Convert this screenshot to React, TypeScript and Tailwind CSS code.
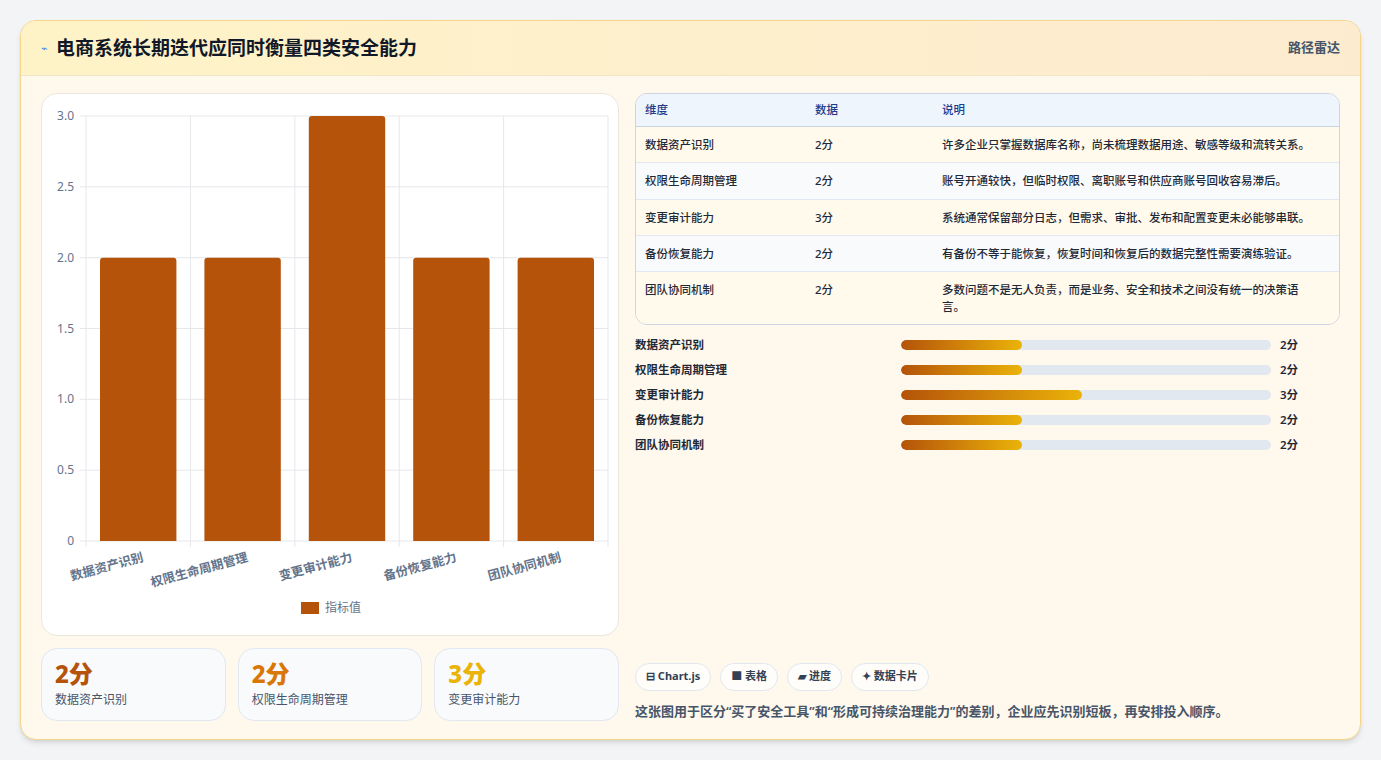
const rows = [
  { name: '数据资产识别', v: 2, d: '许多企业只掌握数据库名称，尚未梳理数据用途、敏感等级和流转关系。' },
  { name: '权限生命周期管理', v: 2, d: '账号开通较快，但临时权限、离职账号和供应商账号回收容易滞后。' },
  { name: '变更审计能力', v: 3, d: '系统通常保留部分日志，但需求、审批、发布和配置变更未必能够串联。' },
  { name: '备份恢复能力', v: 2, d: '有备份不等于能恢复，恢复时间和恢复后的数据完整性需要演练验证。' },
  { name: '团队协同机制', v: 2, d: '多数问题不是无人负责，而是业务、安全和技术之间没有统一的决策语言。' },
]

function Chart() {
  const x0 = 44, x1 = 566, y0 = 22, y1 = 447
  const ticks = [3, 2.5, 2, 1.5, 1, 0.5, 0]
  const bw = (x1 - x0) / 5
  return (
    <svg width="578" height="540" className="block">
      {ticks.map(t => {
        const y = y1 - (t / 3) * (y1 - y0)
        return (
          <g key={t}>
            <line x1={x0 - 6} x2={x1} y1={y} y2={y} stroke="#e5e7eb" />
            <text x={x0 - 12} y={y + 4} textAnchor="end" fontSize="12" fill="#64748b">{t === 0 ? '0' : t.toFixed(1)}</text>
          </g>
        )
      })}
      {[0, 1, 2, 3, 4, 5].map(i => (
        <line key={i} x1={x0 + i * bw} x2={x0 + i * bw} y1={y0} y2={y1 + 6} stroke="#e5e7eb" />
      ))}
      {rows.map((r, i) => {
        const h = (r.v / 3) * (y1 - y0)
        const x = x0 + i * bw + 14
        return (
          <g key={r.name}>
            <path d={`M${x} ${y1} V${y1 - h + 3} Q${x} ${y1 - h} ${x + 3} ${y1 - h} H${x + bw - 31} Q${x + bw - 28} ${y1 - h} ${x + bw - 28} ${y1 - h + 3} V${y1} Z`} fill="#b45309" />
            <text x={x0 + i * bw + bw / 2 + 6} y={y1 + 20} textAnchor="end" fontSize="12.5" fontWeight="600" fill="#64748b" transform={`rotate(-15 ${x0 + i * bw + bw / 2 + 6} ${y1 + 20})`}>{r.name}</text>
          </g>
        )
      })}
      <rect x="259" y="508" width="18" height="12" fill="#b45309" />
      <text x="283" y="518" fontSize="12" fill="#64748b">指标值</text>
    </svg>
  )
}

export default function App() {
  const font = { fontFamily: '"Noto Sans", "Noto Sans CJK SC", sans-serif' }
  return (
    <div className="w-[1381px] h-[760px] bg-[#f3f4f6] pt-5 px-5" style={font}>
      <div className="w-[1341px] h-[720px] rounded-2xl border border-[#f4d58a] bg-[#fff8ec] overflow-hidden shadow-md flex flex-col">
        <div className="h-[55px] shrink-0 flex items-center justify-between px-5 bg-gradient-to-r from-[#fef3c7] to-[#fdebd0] border-b border-[#f1e5c8]">
          <div className="flex items-center gap-2">
            <span className="text-[11px] text-[#3b82f6]">⌁</span>
            <span className="text-[19px] font-bold text-[#111827]">电商系统长期迭代应同时衡量四类安全能力</span>
          </div>
          <span className="text-[13px] font-semibold text-[#475569]">路径雷达</span>
        </div>
        <div className="flex-1 min-h-0 flex gap-4 px-5 pt-[17px] pb-[18px]">
          <div className="w-[578px] flex flex-col gap-3">
            <div className="h-[543px] shrink-0 rounded-2xl bg-white border border-[#ebe6da] overflow-hidden">
              <Chart />
            </div>
            <div className="flex gap-3">
              {[['2分', '数据资产识别', 'text-[#b45309]'], ['2分', '权限生命周期管理', 'text-[#d97706]'], ['3分', '变更审计能力', 'text-[#eab308]']].map(([v, l, c]) => (
                <div key={l} className="flex-1 h-[73px] rounded-2xl border border-[#e2e8f0] bg-[#f8fafc] px-[13px] pt-2">
                  <div className={`text-[24px] font-extrabold leading-[34px] ${c}`}>{v}</div>
                  <div className="text-[12px] text-[#475569]">{l}</div>
                </div>
              ))}
            </div>
          </div>
          <div className="flex-1 flex flex-col">
            <div className="rounded-xl border border-[#cbd5e1] overflow-hidden text-[11.5px] font-medium text-[#1f2937]">
              <div className="flex h-[33px] items-center bg-[#eef5fd] text-[#1e3a8a] border-b border-[#cbd5e1]">
                <div className="w-[179px] pl-[9px]">维度</div>
                <div className="w-[127px]">数据</div>
                <div className="flex-1">说明</div>
              </div>
              {rows.map((r, i) => (
                <div key={r.name} className={`flex py-[9px] border-b last:border-b-0 border-[#e2e8f0] ${i % 2 ? 'bg-[#f8fafc]' : 'bg-[#fffaeb]'}`}>
                  <div className="w-[179px] pl-[9px]">{r.name}</div>
                  <div className="w-[127px]">{r.v}分</div>
                  <div className="flex-1 pr-6 leading-[17px]">{r.d}</div>
                </div>
              ))}
            </div>
            <div className="flex flex-col gap-[8px] mt-[11px]">
              {rows.map(r => (
                <div key={r.name} className="flex items-center h-[17px] text-[11.5px] font-semibold text-[#1f2937]">
                  <div className="w-[266px]">{r.name}</div>
                  <div className="w-[370px] h-[10px] rounded-full bg-[#e2e8f0] overflow-hidden">
                    <div className="h-full rounded-full bg-gradient-to-r from-[#b45309] to-[#eab308]" style={{ width: `${(r.v / 3) * 49}%` }} />
                  </div>
                  <div className="ml-[9px]">{r.v}分</div>
                </div>
              ))}
            </div>
            <div className="flex-1" />
            <div className="flex gap-[9px] text-[11px] font-bold text-[#334155]">
              {['⊟ Chart.js', '■ 表格', '▰ 进度', '✦ 数据卡片'].map(t => (
                <span key={t} className="h-[28px] px-[10px] flex items-center rounded-full border border-[#e2e8f0] bg-white/70">{t}</span>
              ))}
            </div>
            <div className="mt-[11px] text-[13px] font-semibold text-[#475569]">这张图用于区分“买了安全工具”和“形成可持续治理能力”的差别，企业应先识别短板，再安排投入顺序。</div>
          </div>
        </div>
      </div>
    </div>
  )
}
